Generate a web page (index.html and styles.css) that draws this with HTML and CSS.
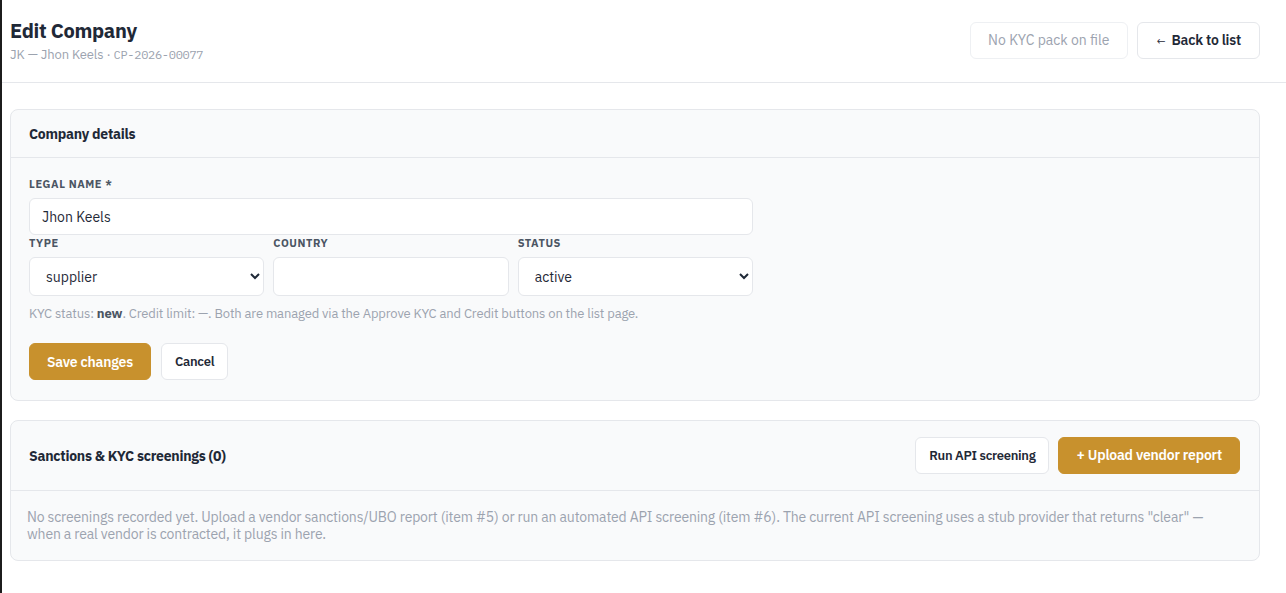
FILE: index.html
```html
<!DOCTYPE html>
<html lang="en">
<head>
    <meta charset="UTF-8">
    <meta name="viewport" content="width=device-width, initial-scale=1.0">
    <title>Edit Company</title>
    <link rel="stylesheet" href="styles.css">
</head>
<body>
    <div class="app">
        <header class="page-header">
            <div>
                <h1>Edit Company</h1>
                <div class="subtitle">JK — Jhon Keels · <span class="mono">CP-2026-00077</span></div>
            </div>
            <div class="header-actions">
                <button class="btn btn-ghost" disabled>No KYC pack on file</button>
                <button class="btn btn-back"><span class="arrow">←</span> Back to list</button>
            </div>
        </header>

        <main class="content">
            <section class="card">
                <div class="card-head">
                    <h2>Company details</h2>
                </div>
                <div class="card-body">
                    <form class="company-form">
                        <label class="field-label" for="legalName">Legal name *</label>
                        <input class="field" type="text" id="legalName" value="Jhon Keels">

                        <div class="form-row">
                            <div class="form-col">
                                <label class="field-label" for="type">Type</label>
                                <select class="field" id="type">
                                    <option>supplier</option>
                                    <option>customer</option>
                                </select>
                            </div>
                            <div class="form-col">
                                <label class="field-label" for="country">Country</label>
                                <input class="field" type="text" id="country">
                            </div>
                            <div class="form-col">
                                <label class="field-label" for="status">Status</label>
                                <select class="field" id="status">
                                    <option>active</option>
                                    <option>inactive</option>
                                </select>
                            </div>
                        </div>

                        <p class="note">KYC status: <strong>new</strong>. Credit limit: —. Both are managed via the Approve KYC and Credit buttons on the list page.</p>

                        <div class="form-actions">
                            <button type="button" class="btn btn-primary">Save changes</button>
                            <button type="button" class="btn btn-sm">Cancel</button>
                        </div>
                    </form>
                </div>
            </section>

            <section class="card">
                <div class="card-head card-head-tall">
                    <h2>Sanctions &amp; KYC screenings (0)</h2>
                    <div class="header-actions">
                        <button class="btn btn-sm">Run API screening</button>
                        <button class="btn btn-primary">+ Upload vendor report</button>
                    </div>
                </div>
                <div class="card-body empty">
                    No screenings recorded yet. Upload a vendor sanctions/UBO report (item #5) or run an automated API screening (item #6). The current API screening uses a stub provider that returns "clear" — when a real vendor is contracted, it plugs in here.
                </div>
            </section>
        </main>
    </div>
</body>
</html>
```

FILE: styles.css
```css
body {
    margin: 0;
    font-family: 'IBM Plex Sans', Roboto, 'Liberation Sans', sans-serif;
    color: #1f2937;
    background: #fff;
}
.app {
    min-height: 100vh;
    border-left: 2px solid #1c1c1c;
}
.mono {
    font-family: 'IBM Plex Mono', 'DejaVu Sans Mono', 'Liberation Mono', monospace;
    font-size: 12px;
    letter-spacing: -0.3px;
}

/* page header */
.page-header {
    display: flex;
    justify-content: space-between;
    align-items: center;
    padding: 17px 26px 19px 8px;
    border-bottom: 1px solid #e5e7eb;
}
.page-header h1 {
    margin: 0;
    font-size: 20px;
    line-height: 28px;
    font-weight: 700;
    letter-spacing: -0.3px;
    color: #1f2937;
}
.subtitle {
    margin-top: 2px;
    font-size: 13px;
    line-height: 16px;
    letter-spacing: -0.1px;
    color: #9ca3af;
}
.header-actions {
    display: flex;
    gap: 9px;
}

/* buttons */
.btn {
    height: 37px;
    padding: 0 18px;
    font-family: inherit;
    font-size: 14px;
    font-weight: 600;
    letter-spacing: -0.2px;
    color: #1f2937;
    background: #fff;
    border: 1px solid #e5e7eb;
    border-radius: 6px;
    cursor: pointer;
}
.btn-back {
    padding: 0 18px 0 19px;
}
.btn .arrow {
    margin-right: 3px;
    font-size: 11px;
    font-weight: 400;
}
.btn-ghost {
    padding: 0 17px;
    font-weight: 400;
    letter-spacing: 0;
    color: #9ca3af;
    border-color: #eef0f3;
    cursor: default;
}
.btn-sm {
    padding: 0 13px;
    font-size: 13px;
    letter-spacing: -0.3px;
}
.btn-primary {
    padding: 0 17px;
    background: #c8912d;
    border-color: #c8912d;
    color: #fff;
}

/* cards */
.content {
    padding: 26px 26px 0 8px;
    display: flex;
    flex-direction: column;
    gap: 19px;
}
.card {
    background: #f9fafb;
    border: 1px solid #e5e7eb;
    border-radius: 8px;
}
.card-head {
    display: flex;
    justify-content: space-between;
    align-items: center;
    height: 47px;
    padding: 0 18px;
    border-bottom: 1px solid #e5e7eb;
}
.card-head-tall {
    height: 69px;
    padding-right: 19px;
}
.card-head-tall .header-actions {
    margin-top: -1px;
}
.card-head h2 {
    margin: 0;
    font-size: 14px;
    font-weight: 700;
    letter-spacing: -0.25px;
    color: #1f2937;
}
.card-body {
    padding: 19px 18px 20px;
}

/* form */
.company-form {
    max-width: 724px;
}
.field-label {
    display: block;
    margin-bottom: 7px;
    font-size: 11px;
    line-height: 14px;
    font-weight: 700;
    letter-spacing: 0.05em;
    text-transform: uppercase;
    color: #4b5563;
}
.field {
    display: block;
    box-sizing: border-box;
    width: 100%;
    height: 37px;
    padding: 0 12px;
    font-family: inherit;
    font-size: 14px;
    color: #1f2937;
    background: #fff;
    border: 1px solid #e5e7eb;
    border-radius: 6px;
}
.form-col .field {
    height: 39px;
}
.form-row {
    margin-top: 1px;
    display: grid;
    grid-template-columns: repeat(3, 1fr);
    gap: 9px;
}
.note {
    margin: 10px 0 21px;
    font-size: 13px;
    line-height: 16px;
    letter-spacing: -0.13px;
    color: #9ca3af;
}
.note strong {
    color: #4b5563;
}
.form-actions {
    display: flex;
    gap: 10px;
}

.empty {
    padding: 18px 50px 17px 16px;
    font-size: 14px;
    line-height: 17px;
    letter-spacing: -0.16px;
    color: #9ca3af;
}
```
